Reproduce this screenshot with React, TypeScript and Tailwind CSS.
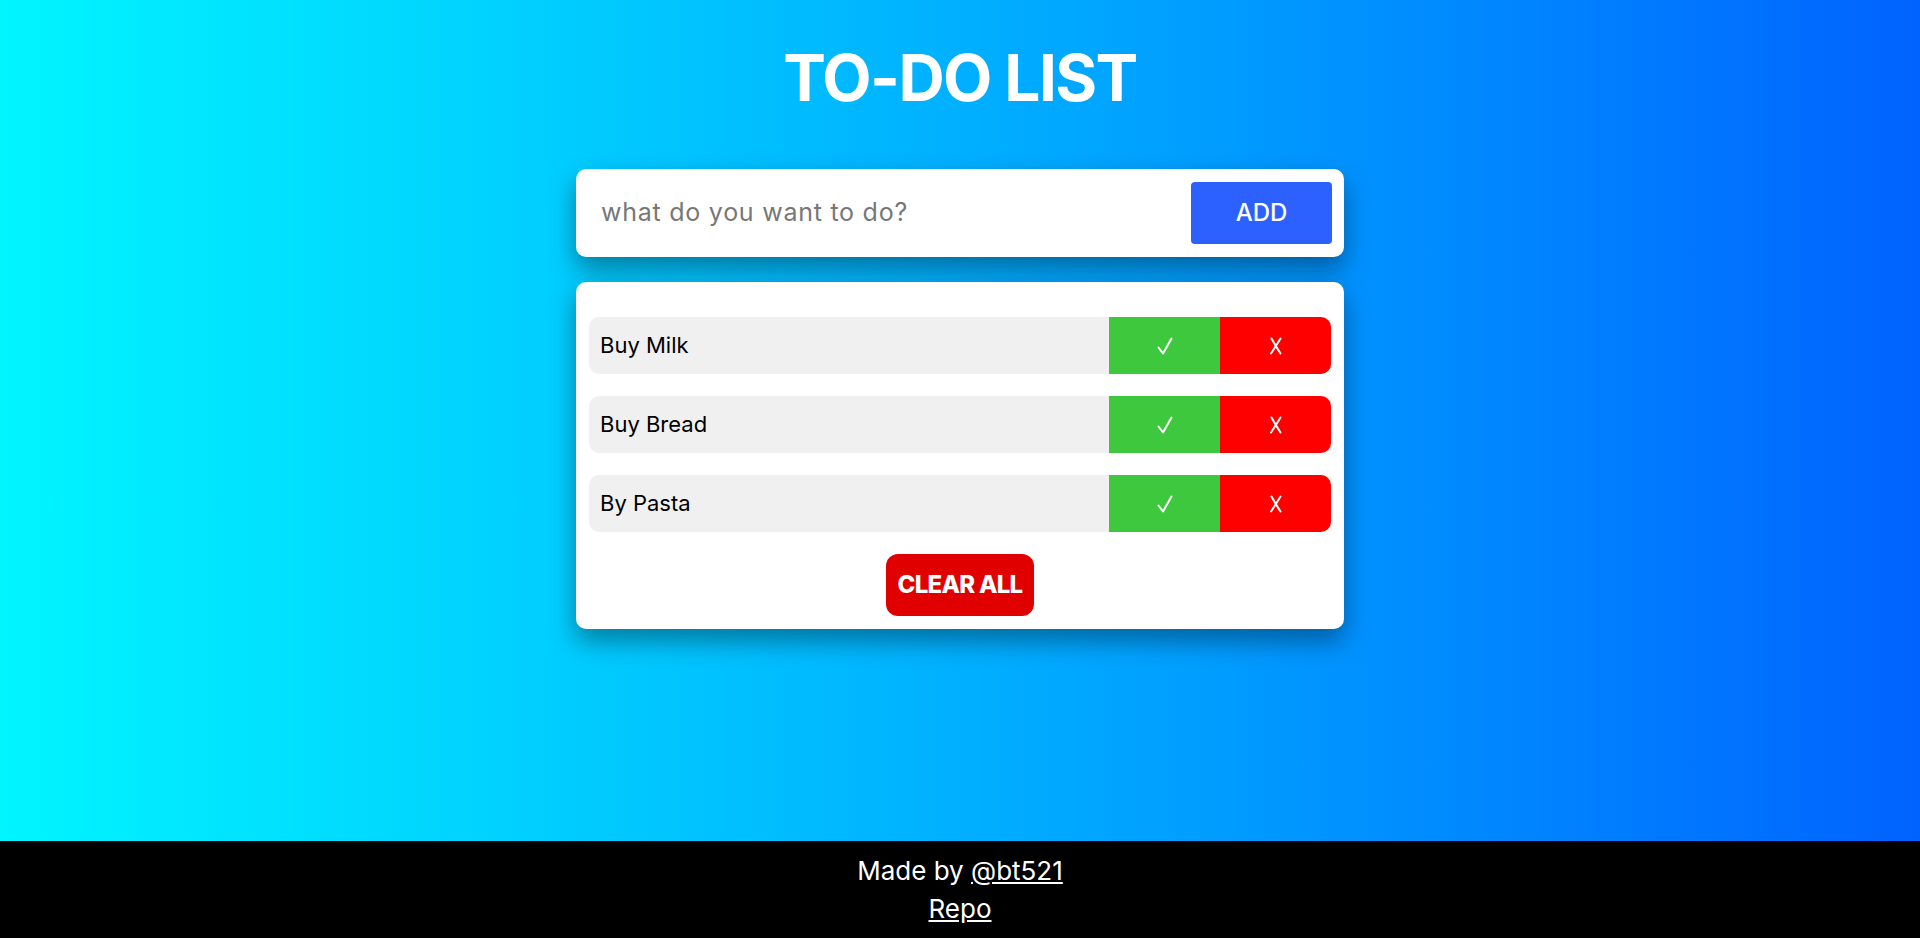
import { useState } from 'react';

const INITIAL = ['Buy Milk', 'Buy Bread', 'By Pasta'];

function CheckMark() {
  return (
    <svg width="16" height="18" viewBox="0 0 16 18" fill="none" stroke="white" strokeWidth="2" strokeLinecap="round" strokeLinejoin="round">
      <path d="M1.5 10.5 L6 16.5 L14.5 1.5" />
    </svg>
  );
}

function CrossMark() {
  return (
    <svg width="14" height="18" viewBox="0 0 14 18" fill="none" stroke="white" strokeWidth="2" strokeLinecap="round">
      <path d="M2.5 1.5 Q6 8 11.5 16.5" />
      <path d="M11.5 1.5 Q7 9 2 16.5" />
    </svg>
  );
}

export default function App() {
  const [todos, setTodos] = useState<string[]>(INITIAL);
  const [text, setText] = useState('');

  const add = () => {
    if (!text.trim()) return;
    setTodos([...todos, text.trim()]);
    setText('');
  };

  return (
    <div className="flex min-h-screen flex-col" style={{ fontFamily: 'Inter, "Open Sans", sans-serif' }}>
      <main className="flex flex-1 flex-col items-center bg-gradient-to-r from-[#00f5ff] to-[#0062ff] pt-[46px]">
        <h1 className="text-[64px] font-bold leading-none tracking-[-0.025em] text-white">TO-DO LIST</h1>

        {/* Input card */}
        <div className="mt-[59px] flex h-[88px] w-[768px] items-center rounded-[10px] bg-white pl-[25px] pr-[12px] shadow-[0_12px_26px_rgba(0,0,0,0.38)]">
          <input
            value={text}
            onChange={e => setText(e.target.value)}
            placeholder="what do you want to do?"
            className="flex-1 bg-transparent text-[25px] tracking-[0.03em] text-[#333] outline-none placeholder:text-[#777]"
          />
          <button onClick={add}
            className="h-[62px] w-[141px] rounded-[4px] bg-[#2d61ff] text-[24px] font-medium text-white">
            ADD
          </button>
        </div>

        {/* List card */}
        <div className="mt-[25px] flex w-[768px] flex-col gap-[22px] rounded-[10px] bg-white px-[13px] pt-[35px] pb-[13px] shadow-[0_12px_26px_rgba(0,0,0,0.38)]">
          {todos.map((t, i) => (
            <div key={i} className="flex h-[57px] items-stretch rounded-[10px] bg-[#f0f0f0]">
              <div className="flex flex-1 items-center pl-[11px] text-[22px] text-black">{t}</div>
              <button className="flex w-[111px] items-center justify-center bg-[#3ec83e]">
                <CheckMark />
              </button>
              <button onClick={() => setTodos(todos.filter((_, j) => j !== i))}
                className="flex w-[111px] items-center justify-center rounded-r-[10px] bg-[#ff0000]">
                <CrossMark />
              </button>
            </div>
          ))}
          <div className="flex justify-center">
            <button onClick={() => setTodos([])}
              className="h-[62px] w-[148px] rounded-[12px] bg-[#e00000] text-[24px] font-extrabold tracking-[-0.03em] text-white">
              CLEAR ALL
            </button>
          </div>
        </div>
      </main>

      <footer className="flex h-[97px] flex-col items-center justify-center bg-black text-[26px] leading-[38px] text-white">
        <div>Made by <a href="#" className="underline">@bt521</a></div>
        <a href="#" className="underline">Repo</a>
      </footer>
    </div>
  );
}
